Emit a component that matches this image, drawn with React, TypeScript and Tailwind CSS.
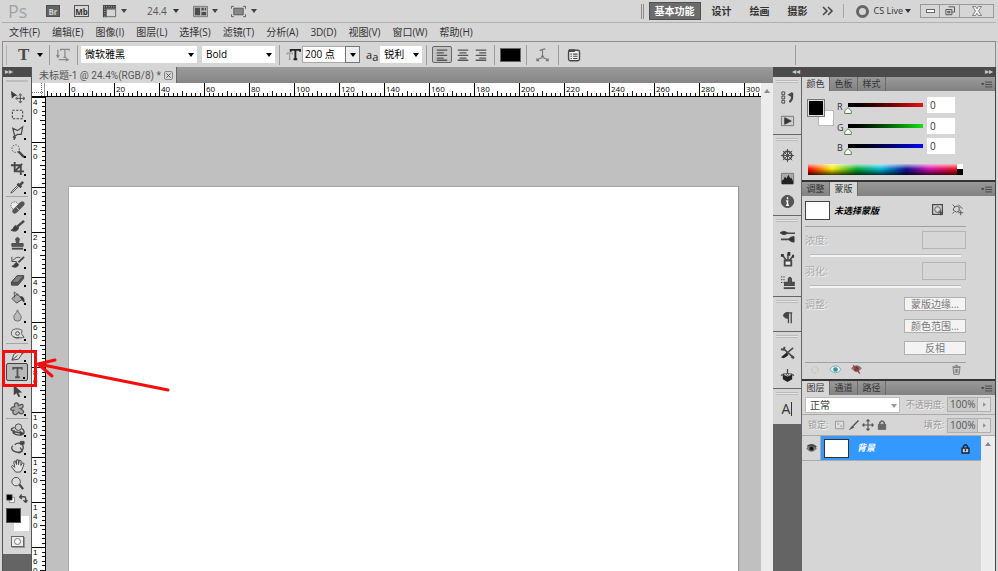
import { useState } from "react";
import type { ReactNode } from "react";

type IconProps = { children: ReactNode; className?: string };

function Icon({ children, className = "size-4" }: IconProps) {
  return (
    <svg viewBox="0 0 16 16" className={`shrink-0 ${className}`} fill="none" stroke="#484848" aria-hidden="true">
      {children}
    </svg>
  );
}

function Arrow({ className = "" }: { className?: string }) {
  return (
    <svg viewBox="0 0 6 4" className={`w-[6px] h-[4px] shrink-0 pointer-events-none ${className}`} aria-hidden="true">
      <path d="M0 0h6L3 4z" fill="currentColor" />
    </svg>
  );
}

function Divider() {
  return <div className="w-px h-5 bg-[#9c9c9c] shrink-0" />;
}

const menus = ["文件(F)", "编辑(E)", "图像(I)", "图层(L)", "选择(S)", "滤镜(T)", "分析(A)", "3D(D)", "视图(V)", "窗口(W)", "帮助(H)"];
const workspaces = ["设计", "绘画", "摄影"];

function AppBar() {
  return (
    <header className="flex h-[23px] items-center justify-between border-b border-[#b0b0b0] pl-[6px] pr-[2px]">
      <div className="flex items-center text-[#444]">
        <span className="w-[38px] text-[18px] leading-5 text-[#a3a3a3]">Ps</span>
        <button className="w-[14px] h-[12px] bg-[#636363] border border-[#505050] text-[8px] leading-[9px] font-bold text-[#d0d0d0]" aria-label="Bridge">Br</button>
        <button className="ml-[14px] w-[15px] h-[12px] border border-[#555] text-[8px] leading-[9px] font-bold text-[#333]" aria-label="Mini Bridge">Mb</button>
        <button className="ml-[13px] flex items-center gap-[4px]" aria-label="查看额外内容">
          <Icon className="size-[15px]">
            <path d="M1 3h14M3 2v12" stroke="#444" strokeWidth="4" />
            <path d="M2 3h13M3 5v9" stroke="#d6d6d6" strokeDasharray="1 1.5" />
            <path d="M5 5.5h9.5v8H5" stroke="#666" />
          </Icon>
          <Arrow />
        </button>
        <button className="ml-5 flex items-center gap-[6px] text-[10px] text-[#555]">24.4 <Arrow className="text-[#333]" /></button>
        <button className="ml-[14px] flex items-center gap-[4px]" aria-label="排列文档">
          <Icon className="size-[15px]">
            <path d="M.5 2.500h15v11H.5z" stroke="#777" fill="#bbb" />
            <path d="M2 4h5.500v8H2zM9 4h2.500v3H9zM12.500 4H14v3h-1.500zM9 8.500h5V12H9z" fill="#4c4c4c" stroke="none" />
          </Icon>
          <Arrow />
        </button>
        <button className="ml-[13px] flex items-center gap-[5px]" aria-label="屏幕模式">
          <Icon className="size-[15px]">
            <path d="M3 4.500h10v7H3z" fill="#888" stroke="#555" />
            <path d="M.5 5V2.500H3M13 2.500h2.500V5M15.500 11v2.500H13M3 13.500H.5V11" stroke="#555" />
          </Icon>
          <Arrow />
        </button>
      </div>
      <div className="flex items-center">
        <div className="h-[15px] w-[3px] border-x border-[#8b8b8b]" />
        <nav className="ml-[5px] flex items-center text-[10px] font-bold text-[#333]" aria-label="工作区">
          <button className="h-[18px] w-[52px] border border-[#4f4f4f] bg-[#6c6c6c] text-white">基本功能</button>
          <div className="ml-[11px] mr-[12px] flex gap-[18px]">
            {workspaces.map((name) => (
              <button key={name}>{name}</button>
            ))}
          </div>
          <button aria-label="更多工作区">
            <Icon className="w-[16px] h-[16px]">
              <path d="m3 4 4 4-4 4M8 4l4 4-4 4" strokeWidth="1.600" />
            </Icon>
          </button>
        </nav>
        <div className="ml-[7px] h-[14px] w-px bg-[#a5a5a5]" />
        <button className="ml-[12px] flex items-center gap-[5px] text-[9px] text-[#333]">
          <span className="size-[13px] rounded-full border-[3px] border-[#666]" />
          <span className="flex items-center gap-[2px]">CS Live <Arrow /></span>
        </button>
        <div className="ml-[9px] flex h-[14px] divide-x divide-[#999] border border-[#999]">
          <button className="w-[19px] flex items-center justify-center" aria-label="最小化">
            <span className="h-[4px] w-[9px] border border-[#666] bg-white" />
          </button>
          <button className="w-[20px] flex items-center justify-center" aria-label="还原">
            <Icon className="size-[12px]">
              <path d="M6 2.500h8v7h-3M2.500 6h8v7h-8zM5 8.500h3v2H5z" stroke="#555" strokeWidth="1.300" />
            </Icon>
          </button>
          <button className="w-[33px] flex items-center justify-center" aria-label="关闭">
            <Icon className="size-[12px]">
              <path d="M2 2h4l2 3 2-3h4l-4 6 4 6h-4l-2-3-2 3H2l4-6z" fill="#f4f4f4" stroke="#777" strokeWidth="1.200" />
            </Icon>
          </button>
        </div>
      </div>
    </header>
  );
}

function AlignIcon({ align }: { align: "left" | "center" | "right" }) {
  const short = { left: "M2", center: "M4", right: "M6" }[align];
  return (
    <Icon className="size-[14px]">
      <path d={`M2 2.500h12${short} 5.500h8M2 8.500h12${short} 11.500h8M2 14h12`} stroke="#555" strokeWidth="1.500" />
    </Icon>
  );
}

function OptionsBar() {
  return (
    <div className="flex h-[26px] items-center border border-b-0 border-[#8c8c8c] text-[10px] text-black">
      <div className="ml-[3px] h-5 w-px bg-[#b3b3b3]" />
      <button className="ml-[11px] flex w-[31px] items-center gap-[8px] font-[Liberation_Serif] text-[17px] font-bold leading-5 text-[#4a4a4a]" aria-label="文字工具预设">
        T <Arrow className="text-black" />
      </button>
      <Divider />
      <button className="mx-[6px]" aria-label="切换文本取向">
        <Icon className="size-[15px]">
          <path d="M5 4V2.500h9V4M9.500 3v8M8 11h3M2 3v7M.5 8.500 2 11l1.500-2.500M3 13.500h9M10.500 12l2.500 1.500-2.500 1.500" stroke="#888" strokeWidth="1.300" />
        </Icon>
      </button>
      <Divider />
      <label className="relative ml-[3px]">
        <select className="h-[17px] w-[116px] appearance-none bg-white pl-[4px]" aria-label="字体">
          <option>微软雅黑</option>
        </select>
        <Arrow className="absolute right-[3px] top-[7px]" />
      </label>
      <label className="relative ml-[5px] mr-[4px]">
        <select className="h-[17px] w-[73px] appearance-none bg-white pl-[4px]" aria-label="字体样式">
          <option>Bold</option>
        </select>
        <Arrow className="absolute right-[3px] top-[7px]" />
      </label>
      <Divider />
      <Icon className="ml-[6px] size-[15px]">
        <path d="M5 5V3h10v2M10 3v10M8 13h4" stroke="#222" strokeWidth="2" />
        <path d="M1 8V6.500h6V8M4 7v6M3 13h2" stroke="#888" />
      </Icon>
      <label className="relative ml-px flex">
        <select className="h-[17px] w-[58px] appearance-none border border-[#aaa] bg-white pl-[2px]" aria-label="字体大小">
          <option>200 点</option>
        </select>
        <span className="pointer-events-none absolute right-0 top-0 flex h-[17px] w-[15px] items-center justify-center border border-[#777] bg-[#eee]">
          <Arrow />
        </span>
      </label>
      <span className="ml-[6px] text-[11px] leading-4 text-[#222]">a<sub className="text-[11px]">a</sub></span>
      <label className="relative ml-[2px] mr-[4px]">
        <select className="h-[17px] w-[42px] appearance-none bg-white pl-[4px]" aria-label="消除锯齿">
          <option>锐利</option>
        </select>
        <Arrow className="absolute right-[3px] top-[7px]" />
      </label>
      <Divider />
      <div className="ml-[5px] mr-[6px] flex items-center gap-[4px]">
        <button className="flex h-[17px] w-[20px] items-center justify-center rounded-xs border border-[#666] bg-[#c4c4c4]" aria-label="左对齐文本"><AlignIcon align="left" /></button>
        <button aria-label="居中对齐文本"><AlignIcon align="center" /></button>
        <button aria-label="右对齐文本"><AlignIcon align="right" /></button>
      </div>
      <Divider />
      <button className="mx-[5px] h-[14px] w-[21px] border border-[#666] bg-black" aria-label="文本颜色" />
      <Divider />
      <button className="mx-[8px]" aria-label="创建文字变形">
        <Icon className="size-[15px]">
          <path d="M5 4c2-2 4-1 6-2M8 3v7M6.500 10h3M2 14.500c3-4 9-4 12 0M2 12v2.500h2.500M14 12v2.500h-2.500" stroke="#777" strokeWidth="1.200" />
        </Icon>
      </button>
      <Divider />
      <button className="ml-[8px]" aria-label="切换字符和段落面板">
        <Icon className="size-[14px]">
          <rect x="1.800" y="2.500" width="12.500" height="12" rx="2" fill="#eee" strokeWidth="1.600" />
          <path d="M2 3h7" strokeWidth="3" />
          <path d="M7 7h5M7 9.500h5M7 12h5M4 7h1.500M4 9.500h1.500M4 12h1.500" strokeWidth="1.200" />
        </Icon>
      </button>
      <div className="ml-auto mr-[199px]"><Divider /></div>
    </div>
  );
}

type Tool = { label: string; icon: ReactNode };

const toolGroups: Tool[][] = [
  [
    { label: "移动工具", icon: <><path d="m1 2 7 5-3 .5L2 10z" fill="#3c3c3c" stroke="none" /><path d="M11 6v8M7 10h8M9.500 7 11 5l1.500 2M9.500 13l1.500 2 1.500-2M8 8.500 6 10l2 1.500M14 8.500l2 1.500-2 1.500" /></> },
    { label: "矩形选框工具", icon: <path d="M2.500 3.500h11v9h-11z" strokeDasharray="2.500 1.500" strokeWidth="1.200" /> },
    { label: "套索工具", icon: <path d="M3 3.500 8 6l5.500-4-1.500 8H8l-3 2-2-8.500ZM5 12c-2 0-2 3 1 1l-2 3" strokeWidth="1.300" /> },
    { label: "快速选择工具", icon: <><circle cx="6" cy="6" r="4" strokeDasharray="1.500 1.500" /><path d="m9 9 6 6" strokeWidth="2.500" /></> },
    { label: "裁剪工具", icon: <path d="M5 1v10h10M1 4.500h10.500V15M5 11l8-8" strokeWidth="2" /> },
    { label: "吸管工具", icon: <><path d="m9 6-7 7-1 2 2-1 7-7z" fill="#e8e8e8" /><path d="m8 5 4 4M10 7l4-4" strokeWidth="2.800" /></> },
  ],
  [
    { label: "污点修复画笔工具", icon: <><circle cx="5" cy="6" r="4" fill="#eee" strokeDasharray="1 1" /><path d="m5 12 8-8" strokeWidth="5" stroke="#555" strokeLinecap="round" /><path d="m7 8 3 3" stroke="#ccc" /></> },
    { label: "画笔工具", icon: <><path d="m8 9 7-6" strokeWidth="2.600" /><path d="M1 13c3 0 2-4 5-5l3 2c0 4-4 5-8 3z" fill="#3c3c3c" /></> },
    { label: "仿制图章工具", icon: <><path d="M7 8 6 3q2-3 4 0L9 8h5v3H2V8z" fill="#555" /><path d="M2 13.500h12" strokeWidth="2" /></> },
    { label: "历史记录画笔工具", icon: <><path d="M3 7q4-5 8-3M2 3v5h5" /><path d="m9 9 6-6" strokeWidth="2" /><path d="M2 13c3 0 2-3 5-4l2 2c0 3-4 4-7 2z" fill="#3c3c3c" /></> },
    { label: "橡皮擦工具", icon: <><path d="m1.500 11 6-7h7v3l-6 7h-7z" fill="#555" /><path d="m1.500 11 6-7h7l-6 7z" fill="#808080" /></> },
    { label: "油漆桶工具", icon: <><path d="m2 9 6-5 5 6-6 4z" fill="#aaa" /><path d="M8 6c-4-6-4-5-3 2" /><path d="M11 7c4 0 4 3 4 6l-2-2z" fill="#333" /></> },
    { label: "模糊工具", icon: <path d="M8 2c-1 4-4 5-4 8a4 4 0 0 0 8 0c0-3-3-4-4-8z" fill="#bbb" stroke="#666" /> },
    { label: "减淡工具", icon: <><path d="M15 12C10 13 2 14 1.500 8S10 2 13 5l-1 3 3 4z" fill="#ddd" stroke="#555" /><circle cx="8" cy="8" r="2" /><path d="M4 11c1 2 4 2 6 1" /></> },
  ],
  [
    { label: "钢笔工具", icon: <><path d="m2 14 2-6 6-4 3 3-4 6-7 1zM2 14l6-5" fill="#ddd" /><path d="m10 3 4 4" strokeWidth="2" /></> },
    { label: "横排文字工具", icon: <path d="M3.500 5V3h9v2M8 3v10M5.500 13h5" stroke="#555" strokeWidth="2" /> },
    { label: "路径选择工具", icon: <path d="m4 2 9 8-4 .5 2 4-2 .5-2-4-3 2z" fill="#444" stroke="none" /> },
    { label: "自定形状工具", icon: <path d="M7 2q2 0 2 3 5-3 5 0t-3 3q5 3 3 5t-5-1q-3 4-5 2t0-4q-4 0-3-2t4-2q-1-4 2-4z" fill="#aaa" stroke="#555" strokeWidth="1.300" /> },
  ],
  [
    { label: "3D对象旋转工具", icon: <><circle cx="9" cy="5.500" r="3.500" fill="#ccc" /><path d="M5 6C-2 7 3 11 8 11l4 1M5 9c-4 2 0 5 5 5 6 0 6-4 3-7" strokeWidth="1.500" /><path d="m10 9 5 3-4 3z" fill="#444" stroke="none" /></> },
    { label: "3D旋转相机工具", icon: <><path d="M3 6c-4 4 3 9 9 6M5 5c5-4 12 1 8 6M9 14l4-2-2-4" strokeWidth="1.400" /><path d="M11 1.500h4v3h-4z" fill="#444" /></> },
    { label: "抓手工具", icon: <path d="M6 15 1.500 9 3 8l2 2-1-6 1.500-1L7 7V2h2v5l1-4.500 2 .5-.5 5 2-3 1.500 1-2 6-2 3z" fill="#e3e3e3" stroke="#444" /> },
    { label: "缩放工具", icon: <><circle cx="6.500" cy="6" r="4.500" fill="#ddd" /><path d="m10 9 4 5" strokeWidth="2.500" /></> },
  ],
];

function Toolbar() {
  return (
    <aside className="flex w-[30px] shrink-0 flex-col border-x border-[#555] bg-[#646464]">
      <div className="h-[10px] bg-[#4b4b4b] pl-[2px] text-[8px] leading-[8px] text-[#ccc]">▸▸</div>
      <div className="bg-[#d6d6d6] px-[3px] pb-[7px]">
        <div className="mt-[3px] mb-[5px] h-[2px] border-y border-y-[#bdbdbd] bg-[#eee]" />
        {toolGroups.map((group, i) => (
          <div key={i} className={i < toolGroups.length - 1 ? "mb-px border-b border-[#a4a4a4] pb-px" : ""}>
            {group.map((tool) => {
              const active = tool.label === "横排文字工具";
              const plain = tool.label === "移动工具" || tool.label === "缩放工具";
              return (
                <button
                  key={tool.label}
                  aria-label={tool.label}
                  aria-pressed={active}
                  className={`relative flex h-[18px] w-full items-center justify-center rounded-xs ${active ? "border border-[#444] bg-[#b9b9b9]" : ""}`}
                >
                  <Icon className="size-[15px]">{tool.icon}</Icon>
                  {!plain && <span className="absolute bottom-px right-[2px] size-[2px] bg-black" />}
                </button>
              );
            })}
          </div>
        ))}
        <div className="flex items-center justify-between py-[2px]">
          <button aria-label="默认前景色和背景色"><Icon className="size-[9px]"><path d="M6 6h9v9H6z" fill="#fff" /><path d="M1 1h10v10H1z" fill="#000" stroke="#777" /></Icon></button>
          <button aria-label="切换前景色和背景色"><Icon className="size-[9px]"><path d="M2 5h7q3 0 3 3v6M5 1 1 5l4 4M8 11l4 4 3-4" strokeWidth="2.500" /></Icon></button>
        </div>
        <div className="mt-[3px] grid h-[23px] w-[23px] grid-cols-3 grid-rows-3">
          <button className="z-10 col-start-1 col-span-2 row-start-1 row-span-2 border border-[#555] bg-black" aria-label="前景色" />
          <button className="col-start-2 col-span-2 row-start-2 row-span-2 bg-white" aria-label="背景色" />
        </div>
        <button className="mx-auto mt-[5px] flex h-[11px] w-[13px] items-center justify-center border border-[#666] bg-[#eee] shadow-[1px_1px_0_#999]" aria-label="以快速蒙版模式编辑">
          <span className="size-[7px] rounded-full border border-[#777] bg-white" />
        </button>
      </div>
    </aside>
  );
}

const ticks = [5, 9, 14, 18, 23, 27, 32, 36, 41];

function TopSegment({ label }: { label: string }) {
  return (
    <div className="relative h-[13px] w-[45px] shrink-0 border-l border-black pl-px text-[8px] leading-[11px]">
      {label}
      <svg className="absolute inset-0 h-[13px] w-[45px]" aria-hidden="true">
        {ticks.map((x) => (
          <path key={x} d={`M${x - 0.5} 13v-${x === 23 ? 5 : 3}`} stroke="#111" />
        ))}
      </svg>
    </div>
  );
}

function SideSegment({ label }: { label: string }) {
  return (
    <div className="relative h-[45px] w-[13px] shrink-0 border-t border-black pl-px font-[Liberation_Sans] text-[8px] leading-[9px]">
      {label.split("").map((digit, i) => (
        <div key={i}>{digit}</div>
      ))}
      <svg className="absolute inset-0 h-[45px] w-[13px]" aria-hidden="true">
        {ticks.map((y) => (
          <path key={y} d={`M13 ${y - 0.5}h-${y === 23 ? 5 : 3}`} stroke="#111" />
        ))}
      </svg>
    </div>
  );
}

const topLabels = Array.from({ length: 16 }, (_, i) => String(i * 20));
const sideLabels = ["40", "20", "0", "20", "40", "60", "80", "100", "120", "140", "160"];

function DocumentWindow() {
  return (
    <main className="flex min-w-0 flex-1 flex-col">
      <div className="flex h-[16px] shrink-0 bg-linear-to-b from-[#9b9b9b] to-[#858585]">
        <div className="flex items-center gap-[3px] border-r border-[#666] bg-[#d6d6d6] pl-[7px] pr-[3px] font-[Roboto,'Noto_Sans_CJK_SC',sans-serif] text-[10px] leading-[15px] text-[#555]">
          未标题-1 @ 24.4%(RGB/8) *
          <button className="flex size-[9px] items-center justify-center rounded-xs border border-[#888]" aria-label="关闭文档">
            <Icon className="size-[7px]"><path d="m3 3 10 10M13 3 3 13" strokeWidth="2" /></Icon>
          </button>
        </div>
      </div>
      <div className="flex min-h-0 flex-1">
        <div className="flex min-w-0 flex-1 flex-col">
          <div className="flex h-[14px] shrink-0 overflow-hidden border-b border-black bg-white text-black">
            <div className="w-[13px] shrink-0 border-r border-[#999]">
              <svg className="h-[13px] w-[12px]" aria-hidden="true"><path d="M9.500 0v13M0 9.500h12" stroke="#777" strokeDasharray="1 1" /></svg>
            </div>
            <div className="flex w-[24px] shrink-0 justify-end overflow-hidden"><TopSegment label="" /></div>
            {topLabels.map((label) => (
              <TopSegment key={label} label={label} />
            ))}
          </div>
          <div className="flex min-h-0 flex-1">
            <div className="w-[14px] shrink-0 overflow-hidden border-r border-black bg-white text-black">
              {sideLabels.map((label, i) => (
                <SideSegment key={i} label={label} />
              ))}
            </div>
            <div className="flex flex-1 bg-[#c0c0c0] pl-[22px] pr-[23px] pt-[89px]">
              <div className="flex-1 border-l border-t border-[#aaa] bg-white shadow-[1px_0_1px_#999]" />
            </div>
          </div>
        </div>
        <div className="w-[12px] shrink-0 bg-[#ececec] pt-[6px] text-[#888]">
          <Arrow className="mx-auto rotate-180" />
        </div>
      </div>
    </main>
  );
}

const dockGroups: { className: string; items: Tool[] }[] = [
  {
    className: "h-[58px]",
    items: [
      { label: "历史记录", icon: <><path d="M2 2h3v3H2zM2 6.500h3v3H2zM2 11h3v3H2z" /><path d="M13 3v4q0 4-3 6" strokeWidth="2.200" /><path d="M13 2v6L8 5z" fill="#484848" stroke="none" /></> },
      { label: "动作", icon: <><path d="M1.500 3.500h13v10h-13z" fill="#ccc" stroke="#777" /><path d="m5 5 7 3.500L5 12z" fill="#333" /></> },
    ],
  },
  {
    className: "h-[81px]",
    items: [
      { label: "调整", icon: <><circle cx="8" cy="8" r="4.500" strokeWidth="1.800" /><path d="M8 1v14M1 8h14M3 3l10 10M13 3 3 13" /></> },
      { label: "直方图", icon: <><path d="M1.500 2.500h13v11h-13z" fill="#aaa" stroke="#777" /><path d="M2 14v-4l2-1 1-3 2 2 2-4 2 4 1-1 2 4v3z" fill="#222" stroke="none" /></> },
      { label: "信息", icon: <><circle cx="8" cy="8" r="6.500" fill="#555" /><path d="M8 3.500v2M6.500 7.500H8V12M6.500 12h3" stroke="#fff" strokeWidth="1.600" /></> },
    ],
  },
  {
    className: "h-[81px]",
    items: [
      { label: "画笔", icon: <><path d="M6 4.500h10M1 11h9" strokeWidth="1.800" /><path d="M0 4q4-3 8 0-3 4-8 0zM9 11q2-3 6-3v6q-4 0-6-3z" fill="#333" /></> },
      { label: "画笔预设", icon: <><path d="M5 9h7v5.500H5z" fill="#eee" strokeWidth="2" /><path d="M7 9 3 4M8.500 9V2M10 9l4-5" strokeWidth="1.600" /><path d="M1 2h3v3H1zM8 0h3v4H8zM13 3h2v3h-2z" fill="#333" stroke="none" /></> },
      { label: "仿制源", icon: <><path d="M1 2h5M1 5h4M1 8h3" strokeDasharray="1.500 1" /><path d="M9 8V4q1.500-3 3 0v4h3v3H5V8z" fill="#555" strokeWidth="1.500" /><path d="M4 14h12" strokeWidth="2" /></> },
    ],
  },
  { className: "h-[35px]", items: [{ label: "段落", icon: <><path d="M9 3v11M12 3v11M7 3h6" strokeWidth="1.400" /><path d="M9 2.500C2 2.500 2 9 9 9z" fill="#444" /></> }] },
  {
    className: "h-[57px]",
    items: [
      { label: "工具预设", icon: <><path d="m7 9 7-6" strokeWidth="1.600" /><path d="m4 4 4 4 6 5" strokeWidth="1.800" /><path d="M1 4.500 4 5l1-3" strokeWidth="2" /><path d="m1 13 6-5 2 3-5 3z" fill="#222" stroke="none" /><path d="m12 12 3 2" strokeWidth="2.600" /></> },
      { label: "图层复合", icon: <><path d="m3 7 5 2 5-2v5l-5 3-5-3z" fill="#222" stroke="none" /><path d="m1 8 4-2M15 8l-4-2M8 1v6" strokeWidth="1.400" /><path d="m6 6 2 2.500L10 6z" fill="#eee" stroke="#333" strokeWidth=".8" /></> },
    ],
  },
];

function Grip() {
  return <div className="mx-[3px] mt-[3px] mb-[4px] h-[3px] shrink-0 border-y border-[#bbb] bg-[#e6e6e6]" />;
}

function Dock() {
  return (
    <div className="w-[28px] shrink-0">
      {dockGroups.map((group, i) => (
        <div key={i} className={`flex flex-col border-b border-[#666] bg-[#d6d6d6] ${group.className}`}>
          <Grip />
          {group.items.map((item) => (
            <button key={item.label} aria-label={item.label} className="flex h-[23px] w-full shrink-0 items-center justify-center pb-[2px]">
              <Icon className="size-[15px]">{item.icon}</Icon>
            </button>
          ))}
        </div>
      ))}
      <div className="flex h-[35px] flex-col bg-[#d6d6d6]">
        <Grip />
        <button className="flex items-center justify-center gap-px text-[14px] leading-[20px] text-[#333]" aria-label="字符">
          A
          <span className="h-[14px] w-px bg-[#333]" />
        </button>
      </div>
    </div>
  );
}

function Tabs({ names, active }: { names: string[]; active: string }) {
  return (
    <div className="flex h-[14px] shrink-0 bg-linear-to-b from-[#999] to-[#828282] text-[9px] leading-[14px] text-[#333]">
      <div role="tablist" className="flex">
        {names.map((name) => (
          <button
            key={name}
            role="tab"
            aria-selected={name === active}
            className={`w-[28px] border-r border-[#6b6b6b] ${name === active ? "bg-[#d6d6d6]" : ""}`}
          >
            {name}
          </button>
        ))}
      </div>
      <button className="ml-auto mr-[3px] flex items-center" aria-label="面板菜单">
        <Icon className="size-[11px]">
          <path d="M0 6h5L2.500 9z" fill="#333" stroke="none" />
          <path d="M6 4.500h10M6 8h10M6 11.500h10" strokeWidth="1.400" />
        </Icon>
      </button>
    </div>
  );
}

const channels = [
  { name: "R", gradient: "bg-linear-to-r from-black to-[#f01010]" },
  { name: "G", gradient: "bg-linear-to-r from-black to-[#18e018]" },
  { name: "B", gradient: "bg-linear-to-r from-black to-[#0808f0]" },
];

function ColorPanel() {
  const [values, setValues] = useState([0, 0, 0]);
  const change = (index: number, next: string) =>
    setValues(values.map((v, i) => (i === index ? Math.min(255, Number(next) || 0) : v)));

  return (
    <section>
      <Tabs names={["颜色", "色板", "样式"]} active="颜色" />
      <div className="h-[89px] px-[6px] pt-[6px]">
        <div className="flex">
          <div className="mt-[3px] grid h-[26px] w-[26px] shrink-0 grid-cols-5 grid-rows-5">
            <button className="z-10 col-start-1 col-span-3 row-start-1 row-span-3 outline outline-[#777] border border-[#ddd] bg-black" aria-label="设置前景色" />
            <button className="col-start-3 col-span-3 row-start-3 row-span-3 border border-[#bbb] bg-white" aria-label="设置背景色" />
          </div>
          <div className="flex flex-1 flex-col gap-[4px] pl-[3px]">
            {channels.map((channel, i) => (
              <div key={channel.name} className="flex items-center text-[9px] text-[#333]">
                <label htmlFor={channel.name} className="w-[11px] pt-[3px]">{channel.name}</label>
                <div className="relative h-[16px] max-w-[76px] flex-1 pt-[6px]">
                  <div className={`h-[4px] ${channel.gradient}`} />
                  <svg viewBox="0 0 8 7" className="absolute top-[10px] -ml-[4px] h-[7px] w-[8px]" style={{ left: `${values[i] / 2.55}%` }} aria-hidden="true">
                    <path d="M4 .7 7.300 4v2.500H.7V4z" fill="#fff" stroke="#5a8a4a" />
                  </svg>
                  <input id={channel.name} type="range" max={255} value={values[i]} onChange={(e) => change(i, e.target.value)} className="absolute inset-0 w-full opacity-0" />
                </div>
                <input value={values[i]} onChange={(e) => change(i, e.target.value)} aria-label={`${channel.name} 值`} className="ml-[4px] h-[16px] w-[28px] bg-white pl-[3px] text-[10px]" />
              </div>
            ))}
          </div>
          <div className="w-[34px] shrink-0" />
        </div>
        <div className="mt-[9px] mr-[26px] flex h-[11px]">
          <div className="flex-1 bg-[linear-gradient(to_bottom,rgba(255,255,255,.7),transparent_45%,rgba(0,0,0,.75)),linear-gradient(to_right,#f00,#fe0_16%,#0a3_33%,#0bd_49%,#119_66%,#d1a_82%,#e11)]" />
          <div className="w-[6px]"><div className="h-1/2 bg-white" /><div className="h-1/2 bg-black" /></div>
        </div>
      </div>
    </section>
  );
}

function MaskField({ label }: { label: string }) {
  return (
    <div className="h-[31px]">
      <div className="flex items-center justify-between">
        <label htmlFor={label} className="text-[#aaa] [text-shadow:1px_1px_0_#f3f3f3]">{label}</label>
        <input id={label} disabled className="h-[18px] w-[44px] border border-[#b5b5b5] bg-transparent" />
      </div>
      <div className="mx-[5px] mt-[5px] h-[3px] border-t border-[#bbb] bg-[#f3f3f3]" />
    </div>
  );
}

function MasksPanel() {
  return (
    <section>
      <Tabs names={["调整", "蒙版"]} active="蒙版" />
      <div className="h-[183px] pl-[3px] pr-[29px] pt-[5px] text-[10px]">
        <div className="flex h-[26px] items-start border-b border-[#a0a0a0]">
          <div className="h-[19px] w-[25px] border border-[#444] bg-white" />
          <h2 className="ml-[4px] mt-[3px] text-[9px] leading-[14px] font-bold italic text-black">未选择蒙版</h2>
          <div className="ml-auto mr-[2px] mt-[2px] flex gap-[7px]">
            <button aria-label="添加像素蒙版"><Icon className="size-[13px]"><path d="M2 2h12v12H2z" strokeWidth="1.500" /><circle cx="8" cy="8" r="3.500" /><path d="M12 9v6M9 12h6" strokeWidth="1.500" /></Icon></button>
            <button aria-label="添加矢量蒙版"><Icon className="size-[13px]"><path d="M3 7q3-5 7-2v5q-3 3-7-1zM9 2l5 5M2 2l3 3M12 9v6M9 12h6M2 13l2-2" stroke="#555" strokeWidth="1.200" /></Icon></button>
          </div>
        </div>
        <div className="pt-[4px]">
          <MaskField label="浓度:" />
          <MaskField label="羽化:" />
        </div>
        <div className="flex justify-between pt-[4px]">
          <span className="text-[#aaa] [text-shadow:1px_1px_0_#f3f3f3]">调整:</span>
          <div className="flex flex-col gap-[8px] text-[#777]">
            {["蒙版边缘...", "颜色范围...", "反相"].map((name) => (
              <button key={name} className="h-[14px] w-[62px] border border-[#b0b0b0] bg-[#f3f3f3] leading-[12px]">{name}</button>
            ))}
          </div>
        </div>
        <div className="mt-[7px] flex h-[14px] items-center gap-[9px] border-t border-[#a0a0a0] pl-[5px]">
          <button aria-label="载入选区"><Icon className="size-[10px]"><circle cx="8" cy="8" r="5" stroke="#aaa" strokeDasharray="2 1" /></Icon></button>
          <button aria-label="应用蒙版"><Icon className="size-[13px]"><path d="M1 8q7-9 14 0-7 8-14 0z" fill="#e8ffff" stroke="#5aa5aa" /><circle cx="8" cy="8" r="2.500" fill="#3a8f97" stroke="#5aa5aa" /></Icon></button>
          <button aria-label="停用蒙版"><Icon className="size-[11px]"><path d="M1 6q7-7 14 0-7 10-14 0z" fill="#a57882" stroke="#654" /><circle cx="8" cy="7" r="3" fill="#633" /><path d="m3 2 10 12" stroke="#b33" strokeWidth="2" /></Icon></button>
          <button className="ml-auto mr-[4px]" aria-label="删除蒙版"><Icon className="size-[11px]"><path d="M3 5h10l-1 10H4zM2 4h12M6 2h4M6 7v6M8 7v6M10 7v6" stroke="#777" strokeWidth="1.300" /></Icon></button>
        </div>
      </div>
    </section>
  );
}

function Percent({ label }: { label: string }) {
  return (
    <div className="ml-auto flex items-center">
      <label htmlFor={label} className="mr-[3px] text-[9px] text-[#999] [text-shadow:1px_1px_0_#f3f3f3]">{label}</label>
      <input id={label} disabled value="100%" readOnly className="h-[15px] w-[31px] border border-[#b0b0b0] bg-[#cacaca] pl-[2px] text-[#555]" />
      <button className="flex h-[15px] w-[13px] items-center justify-center border border-l-0 border-[#b0b0b0] bg-[#dedede] text-[#888]" aria-label={`${label} 滑块`}>
        <Icon className="size-[7px]"><path d="m5 3 6 5-6 5z" fill="#888" stroke="none" /></Icon>
      </button>
    </div>
  );
}

function LayersPanel() {
  return (
    <section className="flex min-h-0 flex-1 flex-col text-[10px]">
      <Tabs names={["图层", "通道", "路径"]} active="图层" />
      <div className="flex h-[20px] shrink-0 items-center border-b border-[#aaa] pl-[3px] pr-[4px]">
        <label className="relative flex">
          <select className="h-[16px] w-[95px] appearance-none border border-[#bbb] bg-white pl-[4px] text-[#444]" aria-label="混合模式">
            <option>正常</option>
          </select>
          <Arrow className="absolute right-[3px] top-[7px] text-[#999]" />
        </label>
        <Percent label="不透明度:" />
      </div>
      <div className="flex h-[21px] shrink-0 items-center border-b border-[#aaa] pl-[6px] pr-[4px]">
        <span className="mr-[6px] text-[9px] text-[#999] [text-shadow:1px_1px_0_#f3f3f3]">锁定:</span>
        <div className="flex gap-[2px]">
          <button aria-label="锁定透明像素"><Icon className="size-3"><path d="M2 3h11v10H2z" fill="#ddd" stroke="#888" /><path d="M4 5h3v3H4zM8 8h3v3H8z" fill="#bbb" stroke="none" /></Icon></button>
          <button aria-label="锁定图像像素"><Icon className="size-3"><path d="m7 9 7-7" strokeWidth="2" stroke="#555" /><path d="m2 14 4-5 2 2z" fill="#555" stroke="#555" /></Icon></button>
          <button aria-label="锁定位置"><Icon className="size-3"><path d="M8 1v14M1 8h14M6 3l2-2 2 2M6 13l2 2 2-2M3 6 1 8l2 2M13 6l2 2-2 2" stroke="#555" strokeWidth="1.500" /></Icon></button>
          <button aria-label="锁定全部"><Icon className="size-3"><path d="M5 8V5q3-5 6 0v3" stroke="#666" strokeWidth="2" /><path d="M3 7h10v7H3z" fill="#666" stroke="#666" /></Icon></button>
        </div>
        <Percent label="填充:" />
      </div>
      <div className="flex min-h-0 flex-1">
        <div className="flex-1">
          <div className="flex h-[25px] border-b border-[#aaa]">
            <button className="flex w-[19px] items-center justify-center border-r border-[#aaa]" aria-label="指示图层可见性">
              <Icon className="size-[11px]"><path d="M1 8q7-9 14 0-7 8-14 0z" fill="#888" /><path d="M2 5q6-5 13 1" strokeWidth="2.500" /><circle cx="8" cy="8" r="3" fill="#111" /></Icon>
            </button>
            <div className="flex flex-1 items-center bg-[#3399ff] pl-[3px] pr-[10px]">
              <div className="h-[19px] w-[25px] border border-[#333] bg-white" />
              <span className="ml-[8px] text-[9px] font-bold italic text-white">背景</span>
              <Icon className="ml-auto size-[11px]"><path d="M5 8V5q3-5 6 0v3" stroke="#123" strokeWidth="2" /><path d="M3 7.500h10v7H3z" fill="#ccd" stroke="#123" strokeWidth="2" /><path d="M8 9v3" stroke="#123" strokeWidth="2" /></Icon>
            </div>
          </div>
        </div>
        <div className="w-[14px] bg-[#ececec] pt-[6px] text-[#888]"><Arrow className="mx-auto rotate-180" /></div>
      </div>
    </section>
  );
}

function Annotation() {
  return (
    <svg className="pointer-events-none absolute left-0 top-[346px] z-20 h-[48px] w-[172px]" fill="none" stroke="#f40d0d" strokeWidth="3" aria-hidden="true">
      <path d="M3.500 5.500h32v34h-32z" />
      <path d="M168 44 38 18M55 14 38 18l14 12" strokeLinecap="round" strokeLinejoin="round" />
    </svg>
  );
}

export default function App() {
  return (
    <div className="relative flex h-screen flex-col overflow-hidden bg-[#d6d6d6] px-[2px] font-['Open_Sans','Noto_Sans_CJK_SC',sans-serif]">
      <AppBar />
      <nav className="flex h-[18px] items-center gap-[12px] pl-[7px] text-[10px] text-[#333]" aria-label="菜单">
        {menus.map((item) => (
          <button key={item} className="leading-[14px]">{item}</button>
        ))}
      </nav>
      <OptionsBar />
      <div className="flex min-h-0 flex-1">
        <Toolbar />
        <DocumentWindow />
        <div className="flex w-[223px] shrink-0 flex-col border-r border-[#444] bg-[#646464]">
          <div className="flex h-[10px] shrink-0 justify-between bg-[#4b4b4b] pl-[19px] pr-[2px] text-[8px] leading-[8px] text-[#ccc]">
            <span>◂◂</span>
            <span>▸▸</span>
          </div>
          <div className="flex min-h-0 flex-1">
            <Dock />
            <div className="ml-px flex min-w-0 flex-1 flex-col divide-y-2 divide-[#333] bg-[#d6d6d6]">
              <ColorPanel />
              <MasksPanel />
              <LayersPanel />
            </div>
          </div>
        </div>
      </div>
      <Annotation />
    </div>
  );
}
